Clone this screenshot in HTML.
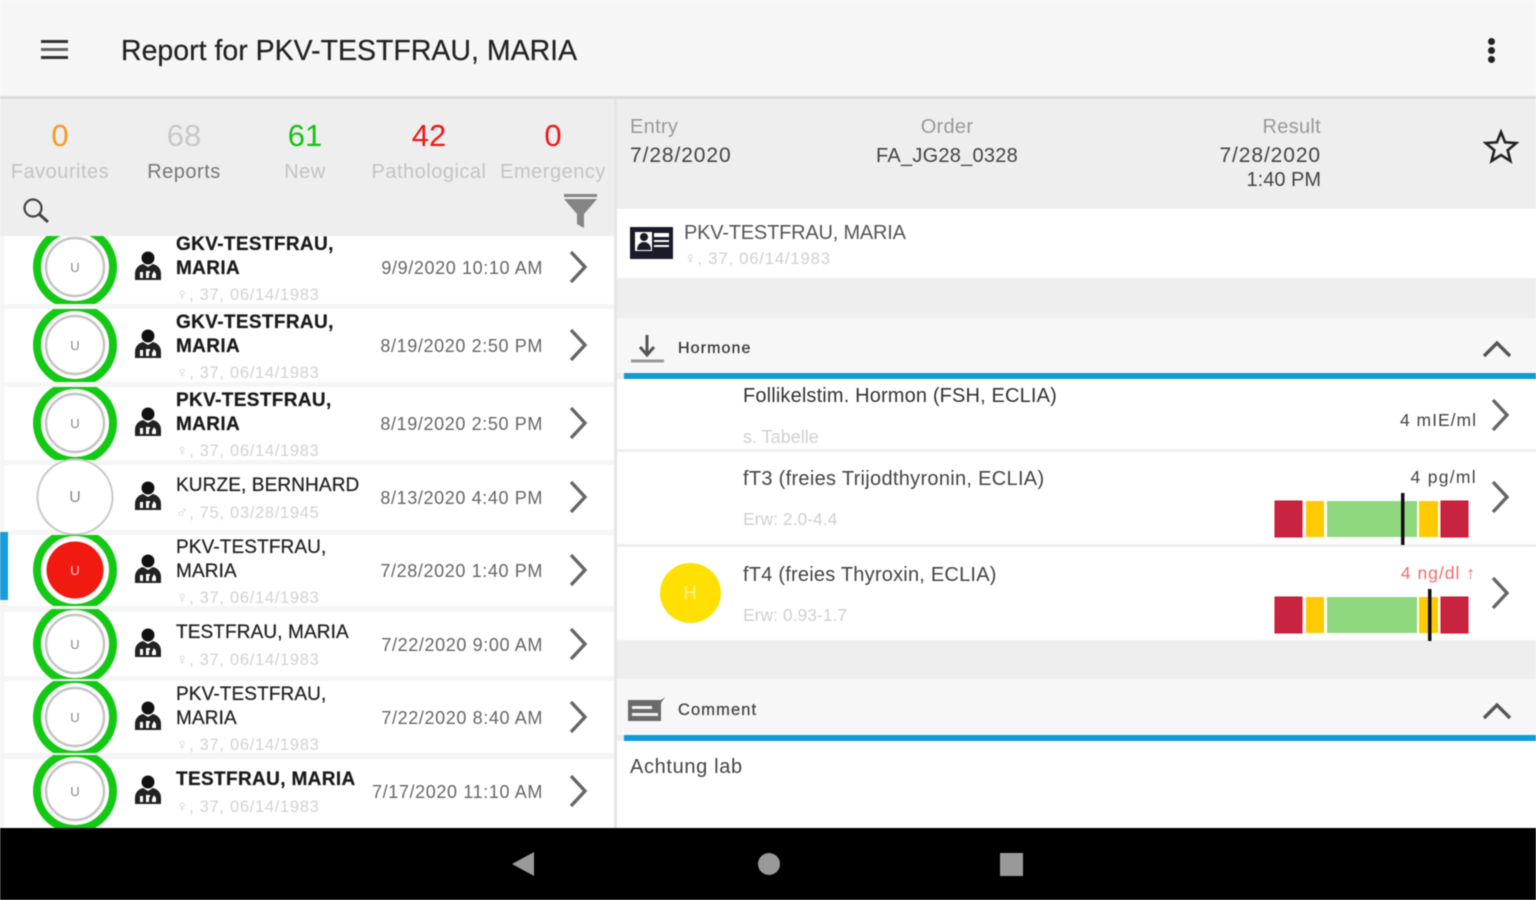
<!DOCTYPE html>
<html><head><meta charset="utf-8"><style>
html,body{margin:0;padding:0;width:1536px;height:900px;overflow:hidden;background:#fff}
#p{position:absolute;left:0;top:0;width:1536px;height:900px;overflow:hidden;font-family:"Liberation Sans",sans-serif;filter:blur(.6px)}
.a{position:absolute}
.t{position:absolute;white-space:nowrap;line-height:24px;height:24px}
.c{transform:translateX(-50%)}
.r{transform:translateX(-100%)}
.n{font-size:19px;color:#222;-webkit-text-stroke:.25px #222;letter-spacing:.12px;margin-top:1px}
.b{font-weight:bold;color:#1a1a1a;letter-spacing:.36px}
.s{font-size:16.5px;color:#d2d2d2;letter-spacing:.7px;margin-top:1px}
.d{font-size:18px;color:#666;letter-spacing:.62px;margin-top:1px}
.l{font-size:20px;color:#c4c4c4;letter-spacing:.5px}
.h{font-size:20px;color:#999;letter-spacing:.3px}
.v{font-size:20px;color:#444;margin-top:1px}
.m{font-size:20px;color:#444;margin-top:1px}
.g{font-size:17px;color:#d0d0d0}
.u{font-size:13px;color:#888;margin-top:1px}
svg{position:absolute;overflow:visible}
</style></head><body><div id="p">
<div class="a" style="left:0;top:0;width:1536px;height:97px;background:#f6f6f6"></div>
<div class="a" style="left:0;top:96px;width:1536px;height:3px;background:#dcdcdc"></div>
<div class="a" style="left:41px;top:40px;width:27px;height:3px;background:#333"></div>
<div class="a" style="left:41px;top:48px;width:27px;height:3px;background:#666"></div>
<div class="a" style="left:41px;top:56px;width:27px;height:3px;background:#333"></div>
<div class="t" style="left:121px;top:39px;font-size:28.5px;color:#222;-webkit-text-stroke:.2px #222">Report for PKV-TESTFRAU, MARIA</div>
<div class="a" style="left:1488px;top:38px;width:7px;height:7px;border-radius:50%;background:#222"></div>
<div class="a" style="left:1488px;top:47px;width:7px;height:7px;border-radius:50%;background:#222"></div>
<div class="a" style="left:1488px;top:56px;width:7px;height:7px;border-radius:50%;background:#222"></div>

<!-- left panel -->
<div class="a" style="left:0;top:99px;width:614px;height:137px;background:#eeeeee"></div>
<div class="a" style="left:0;top:236px;width:614px;height:592px;background:#f5f5f5"></div>
<div class="a" style="left:614px;top:99px;width:3px;height:729px;background:#e6e6e6"></div>
<div class="t c" style="left:60px;top:124px;font-size:31px;color:#f59a23">0</div>
<div class="t c" style="left:184px;top:124px;font-size:31px;color:#c8c8c8">68</div>
<div class="t c" style="left:305px;top:124px;font-size:31px;color:#14c214">61</div>
<div class="t c" style="left:429px;top:124px;font-size:31px;color:#f01818">42</div>
<div class="t c" style="left:553px;top:124px;font-size:31px;color:#f01818">0</div>
<div class="t c l" style="left:60px;top:160px">Favourites</div>
<div class="t c l" style="left:184px;top:160px;color:#777">Reports</div>
<div class="t c l" style="left:305px;top:160px">New</div>
<div class="t c l" style="left:429px;top:160px">Pathological</div>
<div class="t c l" style="left:553px;top:160px">Emergency</div>
<svg style="left:0;top:0" width="60" height="240"><circle cx="33" cy="208" r="8.5" fill="none" stroke="#444" stroke-width="2.2"/><path d="M39 214l9 8" stroke="#444" stroke-width="3"/></svg>
<svg style="left:0;top:0" width="600" height="240"><path d="M564 194h33v3h-33zM564 199h33l-13 15v14l-7-4v-10z" fill="#858585"/></svg>

<!-- rows -->
<div class="a" style="left:4px;top:236px;width:610px;height:68px;background:#fff"></div>
<div class="a" style="left:4px;top:309px;width:610px;height:73px;background:#fff"></div>
<div class="a" style="left:4px;top:387px;width:610px;height:73px;background:#fff"></div>
<div class="a" style="left:4px;top:465px;width:610px;height:65px;background:#fff"></div>
<div class="a" style="left:8px;top:535px;width:606px;height:71px;background:#fff"></div>
<div class="a" style="left:4px;top:612px;width:610px;height:64px;background:#fff"></div>
<div class="a" style="left:4px;top:681px;width:610px;height:72px;background:#fff"></div>
<div class="a" style="left:4px;top:759px;width:610px;height:69px;background:#fff"></div>
<div class="a" style="left:0;top:532px;width:8px;height:68px;background:#1a9bdc"></div>

<svg style="left:0;top:0" width="614" height="828">
<defs>
<g id="u"><circle cx="0" cy="-9" r="6.5" fill="#111"/><path d="M-13 13v-6c0-6 4-9 8-10l5 3 5-3c4 1 8 4 8 10v6z" fill="#222"/><path d="M-8 5h3v6h-3zM-2 4h4v2h-1v5h-3zM6 4l2 3v4h-4v-3z" fill="#fff"/></g>
<path id="ch" d="M0-15L14 0L0 15" fill="none" stroke="#666" stroke-width="3.4"/>
<clipPath id="c1"><rect x="0" y="236" width="150" height="68"/></clipPath>
<clipPath id="c2"><rect x="0" y="309" width="150" height="73"/></clipPath>
<clipPath id="c3"><rect x="0" y="387" width="150" height="73"/></clipPath>
<clipPath id="c5"><rect x="0" y="535" width="150" height="71"/></clipPath>
<clipPath id="c6"><rect x="0" y="609" width="150" height="70"/></clipPath>
<clipPath id="c7"><rect x="0" y="681" width="150" height="72"/></clipPath>
<clipPath id="c8"><rect x="0" y="755" width="150" height="73"/></clipPath>
</defs>
<g clip-path="url(#c1)"><circle cx="75" cy="267" r="38" fill="#fff" stroke="#14c914" stroke-width="8"/><circle cx="75" cy="267" r="29" fill="#fff" stroke="#c4c4c4" stroke-width="2.5"/></g>
<g clip-path="url(#c2)"><circle cx="75" cy="345" r="38" fill="#fff" stroke="#14c914" stroke-width="8"/><circle cx="75" cy="345" r="29" fill="#fff" stroke="#c4c4c4" stroke-width="2.5"/></g>
<g clip-path="url(#c3)"><circle cx="75" cy="423" r="38" fill="#fff" stroke="#14c914" stroke-width="8"/><circle cx="75" cy="423" r="29" fill="#fff" stroke="#c4c4c4" stroke-width="2.5"/></g>
<circle cx="75" cy="497" r="37.5" fill="#fff" stroke="#c8c8c8" stroke-width="2"/>
<g clip-path="url(#c5)"><circle cx="75" cy="570" r="38" fill="#fff" stroke="#14c914" stroke-width="8"/><circle cx="75" cy="570" r="28.5" fill="#f01a10"/></g>
<g clip-path="url(#c6)"><circle cx="75" cy="644" r="38" fill="#fff" stroke="#14c914" stroke-width="8"/><circle cx="75" cy="644" r="29" fill="#fff" stroke="#c4c4c4" stroke-width="2.5"/></g>
<g clip-path="url(#c7)"><circle cx="75" cy="717" r="38" fill="#fff" stroke="#14c914" stroke-width="8"/><circle cx="75" cy="717" r="29" fill="#fff" stroke="#c4c4c4" stroke-width="2.5"/></g>
<g clip-path="url(#c8)"><circle cx="75" cy="791" r="38" fill="#fff" stroke="#14c914" stroke-width="8"/><circle cx="75" cy="791" r="29" fill="#fff" stroke="#c4c4c4" stroke-width="2.5"/></g>
<use href="#u" x="148" y="267"/><use href="#u" x="148" y="345"/><use href="#u" x="148" y="423"/><use href="#u" x="148" y="497"/><use href="#u" x="148" y="570"/><use href="#u" x="148" y="644"/><use href="#u" x="148" y="717"/><use href="#u" x="148" y="791"/>
<use href="#ch" x="571" y="267"/><use href="#ch" x="571" y="345"/><use href="#ch" x="571" y="423"/><use href="#ch" x="571" y="497"/><use href="#ch" x="571" y="570"/><use href="#ch" x="571" y="644"/><use href="#ch" x="571" y="717"/><use href="#ch" x="571" y="791"/>
</svg>
<div class="t c u" style="left:75px;top:255px">U</div>
<div class="t c u" style="left:75px;top:333px">U</div>
<div class="t c u" style="left:75px;top:411px">U</div>
<div class="t c u" style="left:75px;top:485px;font-size:16px">U</div>
<div class="t c u" style="left:75px;top:558px;color:#ffc8c8">U</div>
<div class="t c u" style="left:75px;top:632px">U</div>
<div class="t c u" style="left:75px;top:705px">U</div>
<div class="t c u" style="left:75px;top:779px">U</div>

<div class="t n b" style="left:176px;top:232px">GKV-TESTFRAU,</div>
<div class="t n b" style="left:176px;top:256px">MARIA</div>
<div class="t s" style="left:176px;top:282px">♀, 37, 06/14/1983</div>
<div class="t d r" style="left:543px;top:255px">9/9/2020 10:10 AM</div>

<div class="t n b" style="left:176px;top:310px">GKV-TESTFRAU,</div>
<div class="t n b" style="left:176px;top:334px">MARIA</div>
<div class="t s" style="left:176px;top:360px">♀, 37, 06/14/1983</div>
<div class="t d r" style="left:543px;top:333px">8/19/2020 2:50 PM</div>

<div class="t n b" style="left:176px;top:388px">PKV-TESTFRAU,</div>
<div class="t n b" style="left:176px;top:412px">MARIA</div>
<div class="t s" style="left:176px;top:438px">♀, 37, 06/14/1983</div>
<div class="t d r" style="left:543px;top:411px">8/19/2020 2:50 PM</div>

<div class="t n" style="left:176px;top:473px">KURZE, BERNHARD</div>
<div class="t s" style="left:176px;top:500px">♂, 75, 03/28/1945</div>
<div class="t d r" style="left:543px;top:485px">8/13/2020 4:40 PM</div>

<div class="t n" style="left:176px;top:535px">PKV-TESTFRAU,</div>
<div class="t n" style="left:176px;top:559px">MARIA</div>
<div class="t s" style="left:176px;top:585px">♀, 37, 06/14/1983</div>
<div class="t d r" style="left:543px;top:558px">7/28/2020 1:40 PM</div>

<div class="t n" style="left:176px;top:620px">TESTFRAU, MARIA</div>
<div class="t s" style="left:176px;top:647px">♀, 37, 06/14/1983</div>
<div class="t d r" style="left:543px;top:632px">7/22/2020 9:00 AM</div>

<div class="t n" style="left:176px;top:682px">PKV-TESTFRAU,</div>
<div class="t n" style="left:176px;top:706px">MARIA</div>
<div class="t s" style="left:176px;top:732px">♀, 37, 06/14/1983</div>
<div class="t d r" style="left:543px;top:705px">7/22/2020 8:40 AM</div>

<div class="t n b" style="left:176px;top:767px">TESTFRAU, MARIA</div>
<div class="t s" style="left:176px;top:794px">♀, 37, 06/14/1983</div>
<div class="t d r" style="left:543px;top:779px">7/17/2020 11:10 AM</div>

<!-- right panel -->
<div class="a" style="left:617px;top:99px;width:919px;height:729px;background:#eeeeee"></div>
<div class="t h" style="left:630px;top:115px">Entry</div>
<div class="t v" style="left:630px;top:143px;font-size:21px;letter-spacing:.9px">7/28/2020</div>
<div class="t h c" style="left:947px;top:115px">Order</div>
<div class="t v c" style="left:947px;top:143px;letter-spacing:.25px">FA_JG28_0328</div>
<div class="t h r" style="left:1321px;top:115px">Result</div>
<div class="t v r" style="left:1321px;top:143px;font-size:21px;letter-spacing:.9px">7/28/2020</div>
<div class="t v r" style="left:1321px;top:167px">1:40 PM</div>
<svg style="left:0;top:0" width="1536" height="200"><path d="M1501 132L1505.1 142.3L1516.2 143.1L1507.7 150.2L1510.4 161L1501 155L1491.6 161L1494.3 150.2L1485.8 143.1L1496.9 142.3Z" fill="none" stroke="#222" stroke-width="2.6"/></svg>

<div class="a" style="left:617px;top:209px;width:919px;height:69px;background:#fff"></div>
<svg style="left:0;top:0" width="700" height="270"><path d="M630 227h43v32h-43z" fill="#1a1a2a"/><path d="M635 232h17v19h-17zM654 233h15v4h-15zM654 240h15v2h-15zM654 245h15v2h-15z" fill="#fff"/><circle cx="644" cy="237" r="4" fill="#1a1a2a"/><path d="M637 250c0-5 3-8 7-8s7 3 7 8z" fill="#1a1a2a"/></svg>
<div class="t" style="left:684px;top:221px;font-size:20px;color:#555;letter-spacing:-.2px">PKV-TESTFRAU, MARIA</div>
<div class="t g" style="left:684px;top:247px;letter-spacing:.65px">♀, 37, 06/14/1983</div>

<div class="a" style="left:617px;top:318px;width:919px;height:55px;background:#f7f7f7"></div>
<div class="a" style="left:624px;top:373px;width:912px;height:6px;background:#0f9bd7"></div>
<svg style="left:0;top:0" width="1536" height="370"><path d="M647 335v18M640 347l7 8 7-8" fill="none" stroke="#555" stroke-width="3"/><path d="M631 361h33" stroke="#999" stroke-width="3"/><path d="M1484 356l13-13 13 13" fill="none" stroke="#555" stroke-width="3.4"/></svg>
<div class="t" style="left:678px;top:337px;font-size:16px;color:#333;-webkit-text-stroke:.25px #333;letter-spacing:1.1px">Hormone</div>

<div class="a" style="left:617px;top:379px;width:919px;height:70px;background:#fff"></div>
<div class="a" style="left:617px;top:452px;width:919px;height:92px;background:#fff"></div>
<div class="a" style="left:617px;top:547px;width:919px;height:93px;background:#fff"></div>

<div class="t m" style="left:743px;top:383px;color:#333;letter-spacing:.15px">Follikelstim. Hormon (FSH, ECLIA)</div>
<div class="t g" style="left:743px;top:425px;font-size:18px">s. Tabelle</div>
<div class="t r" style="left:1477px;top:408px;font-size:17.5px;color:#444;letter-spacing:1px">4 mIE/ml</div>
<div class="t m" style="left:743px;top:466px;letter-spacing:.3px">fT3 (freies Trijodthyronin, ECLIA)</div>
<div class="t g" style="left:743px;top:507px;font-size:17.5px">Erw: 2.0-4.4</div>
<div class="t r" style="left:1477px;top:465px;font-size:17.5px;color:#444;letter-spacing:1.3px">4 pg/ml</div>
<div class="t m" style="left:743px;top:562px;letter-spacing:.22px">fT4 (freies Thyroxin, ECLIA)</div>
<div class="t g" style="left:743px;top:603px;font-size:17.5px">Erw: 0.93-1.7</div>
<div class="t r" style="left:1476px;top:561px;font-size:17.5px;color:#f56a6a;letter-spacing:1px">4 ng/dl ↑</div>
<div class="a" style="left:660px;top:563px;width:61px;height:60px;border-radius:50%;background:#ffe000"></div>
<div class="t c" style="left:690px;top:581px;font-size:18px;color:#fff4a0">H</div>

<svg style="left:0;top:0" width="1536" height="828">
<g id="bar1">
<rect x="1275" y="501" width="27" height="36" fill="#c8243f" stroke="#d81030" stroke-width="1"/>
<rect x="1306" y="501" width="18" height="36" fill="#ffca00"/>
<rect x="1327" y="501" width="90" height="36" fill="#90d880"/>
<rect x="1419" y="501" width="19" height="36" fill="#ffca00"/>
<rect x="1441" y="501" width="27" height="36" fill="#c8243f" stroke="#d81030" stroke-width="1"/>
<rect x="1401" y="493" width="3.5" height="52" fill="#111"/>
</g>
<g>
<rect x="1275" y="597" width="27" height="36" fill="#c8243f" stroke="#d81030" stroke-width="1"/>
<rect x="1306" y="597" width="18" height="36" fill="#ffca00"/>
<rect x="1327" y="597" width="90" height="36" fill="#90d880"/>
<rect x="1419" y="597" width="19" height="36" fill="#ffca00"/>
<rect x="1441" y="597" width="27" height="36" fill="#c8243f" stroke="#d81030" stroke-width="1"/>
<rect x="1428" y="589" width="3.5" height="52" fill="#111"/>
</g>
<use href="#ch" x="1493" y="415"/><use href="#ch" x="1493" y="497"/><use href="#ch" x="1493" y="593"/>
</svg>

<div class="a" style="left:617px;top:679px;width:919px;height:56px;background:#f7f7f7"></div>
<div class="a" style="left:624px;top:735px;width:912px;height:6px;background:#0f9bd7"></div>
<div class="a" style="left:617px;top:741px;width:919px;height:87px;background:#fff"></div>
<svg style="left:0;top:0" width="1536" height="740"><path d="M628 700h33l4-3-4 6v18h-33z" fill="#6a6a6a"/><path d="M632 706h20v3h-20zM632 713h26v3h-26z" fill="#f2f2f2"/><path d="M1484 718l13-13 13 13" fill="none" stroke="#555" stroke-width="3.4"/></svg>
<div class="t" style="left:678px;top:698px;font-size:16.5px;color:#444;-webkit-text-stroke:.25px #444;letter-spacing:1.1px">Comment</div>
<div class="t" style="left:630px;top:755px;font-size:20px;color:#444;letter-spacing:.65px">Achtung lab</div>

<div class="a" style="left:0;top:828px;width:1536px;height:72px;background:#000"></div>
<svg style="left:0;top:0" width="1536" height="900"><path d="M512 864l22-12v24z" fill="#999"/><circle cx="769" cy="864" r="11" fill="#999"/><rect x="1000" y="853" width="23" height="23" fill="#999"/></svg>
</div></body></html>
